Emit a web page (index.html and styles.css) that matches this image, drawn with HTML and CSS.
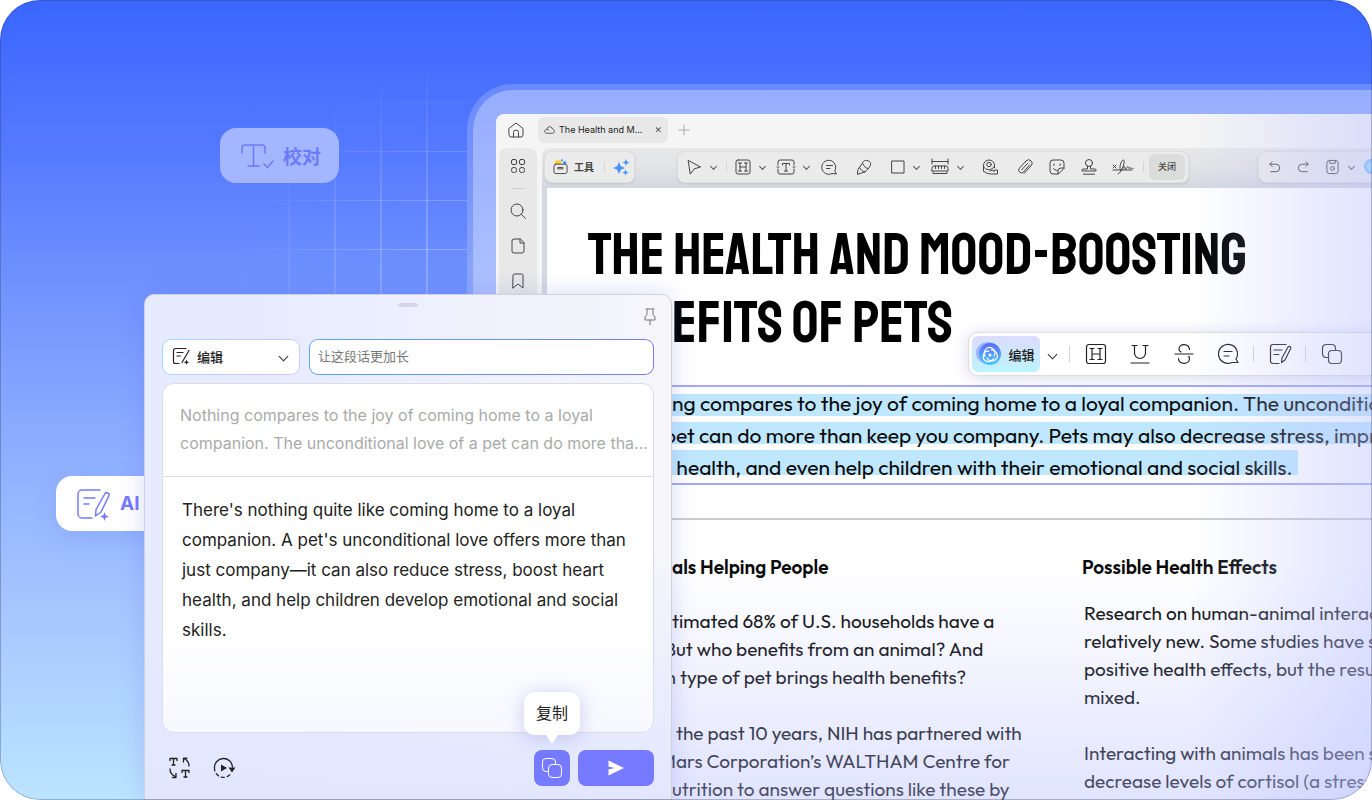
FILE: index.html
```html
<!DOCTYPE html>
<html lang="zh-CN">
  <head>
    <meta charset="UTF-8" />
    <meta name="viewport" content="width=device-width, initial-scale=1.0" />
    <title>AI 编辑</title>
    <link rel="stylesheet" href="styles.css">
  </head>
  <body>
    <div class="stage">
      <div class="grid-lines"></div>

      <div class="chip chip-proof">
        <svg class="chip-icon" viewBox="0 0 34 28">
          <path d="M2 11V6a3 3 0 0 1 3-3h17a3 3 0 0 1 3 3v5M13.500 3v21M8 24h11M24 22l3.500 3.500L33 19" />
        </svg>
        <span>校对</span>
      </div>

      <div class="chip chip-ai">
        <svg class="chip-icon" viewBox="0 0 34 32">
          <path d="M24 2H6a4 4 0 0 0-4 4v20a4 4 0 0 0 4 4h10M8 10h11M8 16h5M29 5.500c1.500-2 5 0 4 2.200L25 24l-5.500 4 .5-6.500z" />
          <path class="solid" d="M28.500 24l1.200 3.300 3.300 1.200-3.300 1.200-1.200 3.300-1.200-3.300-3.300-1.200 3.300-1.200z" />
        </svg>
        <span>AI</span>
      </div>

      <div class="frame">
        <div class="frame-inner">
          <div class="window">
            <div class="tabs">
              <button class="icon-btn home" aria-label="主页">
                <svg viewBox="0 0 16 16"><path d="M1 6.500L8 1l7 5.500V13a2 2 0 0 1-2 2H3a2 2 0 0 1-2-2zM5.500 15v-4.500a2.500 2.500 0 0 1 5 0V15" /></svg>
              </button>
              <div class="tab">
                <svg class="tab-icon" viewBox="0 0 16 16"><path d="M4.500 7a3.800 3.800 0 0 1 7.500 0c4 .5 4 6.500 0 6.500H4C0 13.500 0 8 4 8c2 0 3 1 3 1" /></svg>
                <span>The Health and M...</span>
                <button class="tab-close" aria-label="关闭标签">✕</button>
              </div>
              <button class="icon-btn add" aria-label="新建">
                <svg viewBox="0 0 16 16"><path d="M8 3v10M3 8h10" /></svg>
              </button>
            </div>

            <div class="body">
              <nav class="sidebar">
                <button class="icon-btn" aria-label="缩略图"><svg viewBox="0 0 16 16"><rect x="1.500" y="1.500" width="5" height="5" rx="1.500" /><rect x="9.500" y="1.500" width="5" height="5" rx="1.500" /><rect x="1.500" y="9.500" width="5" height="5" rx="2" /><rect x="9.500" y="9.500" width="5" height="5" rx="2" /></svg></button>
                <span class="side-line"></span>
                <button class="icon-btn" aria-label="搜索"><svg viewBox="0 0 16 16"><circle cx="7" cy="7" r="6" /><path d="M11.500 11.500L15.500 15.500" /></svg></button>
                <button class="icon-btn" aria-label="页面"><svg viewBox="0 0 16 16"><path d="M10 1H4a2 2 0 0 0-2 2v10a2 2 0 0 0 2 2h8a2 2 0 0 0 2-2V5zM10 1v4h4" /></svg></button>
                <button class="icon-btn" aria-label="书签"><svg viewBox="0 0 16 16"><path d="M3 2.500A1.500 1.500 0 0 1 4.500 1h7A1.500 1.500 0 0 1 13 2.500V15l-5-4-5 4z" /></svg></button>
              </nav>

              <main class="main">
                <div class="toolbar">
                  <div class="group group-tools">
                    <button class="tools-btn">
                      <svg viewBox="0 0 16 16">
                        <path class="yellow" d="M2 5V2.500L4 .500l1.500 1L7 .500l2 2V5z" />
                        <circle class="blue" cx="9.500" cy="0.800" r="1.200" />
                        <circle class="blue" cx="12.500" cy="3.500" r="1.800" />
                        <rect class="box" x="1" y="5" width="14" height="10" rx="2" /><path d="M5.500 8.500h5v1.500h-5z" />
                      </svg>
                      <span>工具</span>
                    </button>
                    <span class="sep"></span>
                    <button class="tool sparkle" aria-label="AI"><svg viewBox="0 0 16 16"><path d="M6 3l1.800 4.200L12 9l-4.200 1.800L6 15l-1.800-4.200L0 9l4.200-1.800zM13 0l1 2.500L16.500 3.500 14 4.500 13 7l-1-2.500-2.500-1 2.500-1zM12.500 10.500l.9 2.100 2.100.9-2.100.9-.9 2.100-.9-2.100-2.100-.9 2.100-.9z" /></svg></button>
                  </div>

                  <div class="group group-edit">
                    <button class="tool" aria-label="选择"><svg viewBox="0 0 16 16"><path d="M2.500 1.500l12 6.500-6.300 1.800-3.700 5z" /></svg></button>
                    <span class="chev"></span>
                    <span class="sep"></span>
                    <button class="tool" aria-label="高亮"><svg viewBox="0 0 16 16"><rect x="1" y="1" width="14" height="14" rx="2" /><path d="M5 4v8M11 4v8M5 8h6M3.500 4h3M9.500 4h3M3.500 12h3M9.500 12h3" /></svg></button>
                    <span class="chev"></span>
                    <button class="tool text-tool" aria-label="文本框"><svg viewBox="0 0 18 16"><path d="M1 6V3a2 2 0 0 1 2-2h12a2 2 0 0 1 2 2v3M17 10v3a2 2 0 0 1-2 2H3a2 2 0 0 1-2-2v-3M0 8h2M16 8h2M5.500 6V4.500h7V6M9 4.500V12M7.500 12h3" /></svg></button>
                    <span class="chev"></span>
                    <button class="tool" aria-label="批注"><svg viewBox="0 0 16 16"><path d="M14 11.500a7 7 0 1 0-3 3l4 .5zM5.500 6.500h6M5.500 9.500h3.500" /></svg></button>
                    <button class="tool wide" aria-label="荧光笔"><svg viewBox="0 0 16 16"><path d="M1.500 15L2 10.500 7.500 2.500c2-2.500 8-.5 7 3.500-1 3-4 5.500-5.500 6.800L5.500 14zM3.500 8.500c1.500 2.500 3 4 5.500 4.500M7 5c1 2.500 2.500 4 5 4.500" /></svg></button>
                    <button class="tool wide square" aria-label="形状"><svg viewBox="0 0 14 16"><rect x="1" y="2" width="12" height="12" /></svg></button>
                    <span class="chev"></span>
                    <button class="tool text-tool" aria-label="测量"><svg viewBox="0 0 18 16"><path d="M1 0v5M17 0v5M1 2.500h16M1 9a2 2 0 0 1 2-2h12a2 2 0 0 1 2 2v3H1zM2 13v1.500h14V13M4.500 7v2.500M7.500 7v2.500M10.500 7v2.500M13.500 7v2.500" /></svg></button>
                    <span class="chev"></span>
                    <button class="tool wide" aria-label="修正带"><svg viewBox="0 0 16 16"><circle cx="7" cy="5.500" r="2.200" /><path d="M1.500 12V6.500a5.500 5.500 0 0 1 11 0V9M1.500 7c1 5 9 5 11 0M1.500 12c2 2 5 3 8 3h6v-4h-2.500l-1 1.500-1-1.500-3 1" /></svg></button>
                    <button class="tool wide" aria-label="附件"><svg viewBox="0 0 16 16"><path d="M12.500 6L6.500 13a2.800 2.800 0 0 1-4.200-3.700L9 2a3.500 3.500 0 0 1 5.200 4.700L7 14.500M10.500 4.500L4.500 11" /></svg></button>
                    <button class="tool" aria-label="贴纸"><svg viewBox="0 0 16 16"><path d="M15 9V4a3 3 0 0 0-3-3H4a3 3 0 0 0-3 3v8a3 3 0 0 0 3 3h5zM15 9h-3a3 3 0 0 0-3 3v3M5 5v1.500M11 5v1.500M4.500 9.500A4 4 0 0 0 8 11.500" /></svg></button>
                    <button class="tool" aria-label="图章"><svg viewBox="0 0 16 16"><circle cx="8" cy="4" r="3.500" /><path d="M6.500 7v3H2a1 1 0 0 0-1 1v1h14v-1a1 1 0 0 0-1-1H9.500V7M2.500 15.200h11" /></svg></button>
                    <button class="tool sign" aria-label="签名"><svg viewBox="0 0 20 16"><path d="M0 6l3 3M3 6L0 9M0 11h19M5 15c3-1 7-10 6-13.500C10-.5 7.500 3 7 8c0 4 1.500 5 3 1 1-2 2-2 2 0s1 2 2-.5 2 .5 2 1 1-1 2-.5 1 .5 2 .5" /></svg></button>
                    <span class="sep"></span>
                    <button class="close-btn">关闭</button>
                  </div>

                  <div class="group group-history">
                    <button class="tool" aria-label="撤销"><svg viewBox="0 0 16 16"><path d="M5.500 2.500L3 5l2.500 2.500M3 5h6.500a4 4 0 0 1 0 8H4" /></svg></button>
                    <button class="tool" aria-label="重做"><svg viewBox="0 0 16 16"><path d="M10.500 2.500L13 5l-2.500 2.500M13 5H6.500a4 4 0 0 0 0 8H12" /></svg></button>
                    <button class="tool" aria-label="保存"><svg viewBox="0 0 16 16"><path d="M2 3.500A2.500 2.500 0 0 1 4.500 1h7A2.500 2.500 0 0 1 14 3.500v9a2.500 2.500 0 0 1-2.500 2.500h-7A2.500 2.500 0 0 1 2 12.500zM5 1v3h6V1" /><circle cx="8" cy="9.500" r="2" /></svg></button>
                    <span class="chev"></span>
                    <span class="orb"></span>
                  </div>
                </div>

                <article class="page">
                  <h1>THE HEALTH AND MOOD-BOOSTING<br><span class="lead">BEN</span>EFITS OF PETS</h1>
                  <p class="selected">
                    <span class="lead">Nothi</span>ng compares to the joy of coming home to a loyal companion. The unconditional love<br>
                    <span class="lead lead-wide">of a p</span>et can do more than keep you company. Pets may also decrease stress, improve<br>
                    <span class="lead">heart</span> health, and even help children with their emotional and social skills.
                  </p>
                  <hr>
                  <div class="columns">
                    <section class="col-left">
                      <h2><span class="lead">Anim</span>als Helping People</h2>
                      <p>
                        <span class="lead">An es</span>timated 68% of U.S. households have a<br>
                        <span class="lead lead-wide">pet. B</span>ut who benefits from an animal? And<br>
                        <span class="lead lead-wide">which</span> type of pet brings health benefits?
                      </p>
                      <p>
                        <span class="lead">Over</span> the past 10 years, NIH has partnered with<br>
                        <span class="lead lead-wide">the M</span>ars Corporation’s WALTHAM Centre for<br>
                        <span class="lead">Pet N</span>utrition to answer questions like these by
                      </p>
                    </section>
                    <section class="col-right">
                      <h2>Possible Health Effects</h2>
                      <p>
                        Research on human-animal interactions is<br>
                        relatively new. Some studies have shown<br>
                        positive health effects, but the results are<br>
                        mixed.
                      </p>
                      <p>
                        Interacting with animals has been shown to<br>
                        decrease levels of cortisol (a stress-related
                      </p>
                    </section>
                  </div>
                </article>
              </main>
            </div>

            <div class="float-bar">
              <button class="ai-btn">
                <svg viewBox="0 0 26 26">
                  <defs>
                    <linearGradient id="orbFill" x1="0" y1="0" x2="0" y2="1"><stop offset="0" stop-color="#5c6bff" /><stop offset="1" stop-color="#48c9ff" /></linearGradient>
                  </defs>
                  <ellipse class="halo" cx="11" cy="12" rx="12" ry="11" />
                  <circle class="disc" cx="13" cy="13" r="11" />
                  <g class="orbit">
                    <path id="petal" d="M8 15.500C5.500 9 11 4.500 15.500 7.500c3 2 3 5 1.500 7.500" />
                    <use href="#petal" transform="rotate(120 13 14)" />
                    <use href="#petal" transform="rotate(240 13 14)" />
                  </g>
                  <circle class="dot" cx="13" cy="14" r="1.500" />
                </svg>
                <span>编辑</span>
              </button>
              <span class="chev"></span>
              <span class="sep"></span>
              <button class="big" aria-label="高亮"><svg viewBox="0 0 22 22"><rect x="1.500" y="1.500" width="19" height="19" rx="2.500" /><path d="M7 5.500v11M15 5.500v11M7 11h8M5 5.500h4M13 5.500h4M5 16.500h4M13 16.500h4" /></svg></button>
              <button class="big" aria-label="下划线"><svg viewBox="0 0 22 22"><path d="M3 2.500h5M14 2.500h5M5.500 2.500V10a5.500 5.500 0 0 0 11 0V2.500M2 20h18" /></svg></button>
              <button class="big" aria-label="删除线"><svg viewBox="0 0 22 22"><path d="M2 11h18M16.500 6.500C16 0 6 0 6 6c0 1.500 1 2.500 2 3M5.500 15.500C6 22 16.500 22 16.500 15.500c0-1-.3-1.500-.8-2" /></svg></button>
              <button class="big" aria-label="批注"><svg viewBox="0 0 22 22"><path d="M19 16a9.500 9.500 0 1 0-4 3.500h6zM7 8.500h8M7 13h5" /></svg></button>
              <span class="sep"></span>
              <button class="big" aria-label="改写"><svg viewBox="0 0 22 22"><path d="M17 1.500H4A2.500 2.500 0 0 0 1.500 4v14A2.500 2.500 0 0 0 4 20.500h6M5 7h8M5 11.500h5M19 4c1.500-1.500 3.500 0 2.500 1.800L16 17l-3.500 2.500.5-4.500z" /></svg></button>
              <span class="sep"></span>
              <button class="big" aria-label="复制"><svg viewBox="0 0 22 22"><path d="M7 14.500H5A3.500 3.500 0 0 1 1.500 11V5A3.500 3.500 0 0 1 5 1.500h6A3.500 3.500 0 0 1 14.500 5v2" /><rect x="7.500" y="7.500" width="13" height="13" rx="3.500" /></svg></button>
            </div>

            <div class="fade"></div>
          </div>
        </div>
      </div>

      <div class="panel">
        <div class="panel-top">
          <span class="handle"></span>
          <button class="pin" aria-label="固定"><svg viewBox="0 0 16 18"><path d="M4 1h8M5 1.500v5L3 9v3h10V9l-2-2.500v-5M8 12v5" /></svg></button>
        </div>

        <div class="panel-row">
          <div class="mode">
            <svg class="mode-icon" viewBox="0 0 18 18"><path d="M14 1.500H3.500a2 2 0 0 0-2 2v11a2 2 0 0 0 2 2H7M5 5.500h6M5 9h3.500M17 3.500L10 15.500" /><path class="solid" d="M14.500 12.500l.8 2 2 .8-2 .8-.8 1.900-.8-1.900-2-.8 2-.8z" /></svg>
            <select id="mode" aria-label="模式">
              <option>编辑</option>
            </select>
            <span class="chev"></span>
          </div>
          <input class="prompt" type="text" aria-label="指令" placeholder="让这段话更加长" />
        </div>

        <div class="card">
          <p class="source">Nothing compares to the joy of coming home to a loyal<br>companion. The unconditional love of a pet can do more tha...</p>
          <p class="answer">There's nothing quite like coming home to a loyal<br>companion. A pet's unconditional love offers more than<br>just company—it can also reduce stress, boost heart<br>health, and help children develop emotional and social<br>skills.</p>
        </div>

        <div class="panel-foot">
          <button class="foot-icon" aria-label="替换"><svg viewBox="0 0 24 24"><path d="M2 4.500V2.500h7v2M5.500 2.500V9M4 9h3M14 16.500v-2h7v2M17.500 14.500V21M16 21h3M21 10c0-3-1.500-6-5-7.500M15.500 6V2.200h3.500M2 13c0 3.500 1.500 6 5.500 7.500M4.500 21.500h3.500V17.500" /></svg></button>
          <button class="foot-icon" aria-label="继续"><svg viewBox="0 0 24 24"><path d="M2.500 12a9 9 0 0 1 18-1" /><path class="dash" d="M2.500 12a9 9 0 0 0 16 6" /><path class="solid" d="M9 8.500v7l6-3.500zM16.500 11.500h7L20 16.500z" /></svg></button>
          <div class="copy-wrap">
            <div class="tooltip">复制</div>
            <button class="copy" aria-label="复制"><svg viewBox="0 0 22 22"><path d="M7 14.500H5A3.500 3.500 0 0 1 1.500 11V5A3.500 3.500 0 0 1 5 1.500h6A3.500 3.500 0 0 1 14.500 5v2" /><rect x="7.500" y="7.500" width="13" height="13" rx="3.500" /></svg></button>
          </div>
          <button class="send" aria-label="发送"><svg viewBox="0 0 16 16"><path d="M.500.500L16 8 .500 15.500V9.500L6.500 8 .500 6.500z" /></svg></button>
        </div>
      </div>
    </div>
  </body>
</html>
```
FILE: styles.css
```css
* {
  box-sizing: border-box;
}
body {
  margin: 0;
  background: #fff;
  font-family: Inter, "Noto Sans CJK SC", sans-serif;
  color: #222;
}
button {
  border: 0;
  padding: 0;
  background: none;
  color: inherit;
  font: inherit;
  display: flex;
  align-items: center;
  justify-content: center;
}
svg {
  fill: none;
  stroke: currentColor;
  stroke-linecap: round;
  stroke-linejoin: round;
  display: block;
  overflow: visible;
}
svg .solid {
  fill: currentColor;
  stroke: none;
}
.stage {
  position: relative;
  height: 100vh;
  border-radius: 40px;
  overflow: hidden;
  background: linear-gradient(#3a66ff, #577bff 20%, #7396ff 38%, #8daeff 56%, #a3c3ff 74%, #bce4ff);
}
.stage::after {
  content: "";
  position: absolute;
  inset: 0;
  border: 1px solid rgba(40, 50, 90, 0.3);
  border-radius: 40px;
  pointer-events: none;
}
.grid-lines {
  position: absolute;
  left: 240px;
  top: 53px;
  width: 227px;
  height: 260px;
  background:
    linear-gradient(to right, rgba(255, 255, 255, 0.22) 2px, transparent 2px) 2px 0 / 46px 100%,
    linear-gradient(rgba(255, 255, 255, 0.25) 1px, transparent 1px) 0 0 / 100% 49px;
  mask-image: radial-gradient(circle at 100% 90%, #000 20%, transparent 72%);
}

/* chips */
.chip {
  position: absolute;
  height: 55px;
  display: flex;
  align-items: center;
  border-radius: 16px;
  padding-left: 20px;
  font-size: 19px;
  font-weight: 700;
  color: #767aff;
}
.chip-icon {
  width: 34px;
  stroke-width: 1.5;
}
.chip-proof {
  left: 220px;
  top: 128px;
  width: 119px;
  gap: 9px;
  background: #a3b6ff;
  color: #6b7bf8;
}
.chip-ai {
  left: 56px;
  top: 476px;
  width: 140px;
  gap: 10px;
  background: #fff;
  box-shadow: 0 8px 24px rgba(90, 110, 240, 0.2);
}

/* app window */
.frame {
  position: absolute;
  left: 467px;
  top: 84px;
  right: 0;
  bottom: 0;
  padding: 6px 0 0 6px;
  border-radius: 46px 0 0 0;
  background: rgba(255, 255, 255, 0.18);
}
.frame-inner {
  height: 100%;
  padding: 24px 0 0 23px;
  border-radius: 40px 0 0 0;
  background: rgba(255, 255, 255, 0.3);
}
.window {
  position: relative;
  height: 100%;
  display: flex;
  flex-direction: column;
  overflow: hidden;
  border-radius: 8px 0 0 0;
  background: #f5f5f5;
}
.tabs {
  height: 34px;
  flex: none;
  display: flex;
  align-items: center;
  padding: 0 12px 3px;
}
.icon-btn svg {
  width: 16px;
  height: 16px;
}
.icon-btn {
  color: #444;
}
.tab {
  width: 130px;
  height: 26px;
  margin: 0 8px 0 14px;
  padding: 0 6px;
  display: flex;
  align-items: center;
  gap: 4px;
  white-space: nowrap;
  border-radius: 6px;
  background: #e8e8e8;
  font-size: 9px;
}
.tab-icon {
  width: 11px;
  flex: none;
}
.tab-close {
  margin-left: auto;
  font-family: "DejaVu Sans", sans-serif;
  font-size: 9px;
  color: #555;
}
.add {
  color: #aaa;
}
.body {
  flex: 1;
  min-height: 0;
  display: flex;
  gap: 5px;
  padding-left: 3px;
}
.sidebar {
  width: 38px;
  flex: none;
  display: flex;
  flex-direction: column;
  align-items: center;
  gap: 19px;
  padding-top: 10px;
  border-radius: 8px 8px 0 0;
  background: #e8e8e8;
}
.side-line {
  width: 13px;
  height: 1px;
  margin: -5px 0;
  background: #ccc;
}
.main {
  flex: 1;
  min-width: 0;
  display: flex;
  flex-direction: column;
  border-radius: 8px 0 0 0;
  background: linear-gradient(#e8e8e8, #e2e3e6 20px, #d6d8e1 40px);
  overflow: hidden;
}
.toolbar {
  height: 40px;
  flex: none;
  display: flex;
  align-items: center;
  padding: 0 0 3px 2px;
}
.group {
  height: 32px;
  flex: none;
  display: flex;
  align-items: center;
  padding: 0 3px 0 8px;
  border: 1px solid #dedee0;
  border-radius: 8px;
  background: #ebebeb;
  box-shadow: 0 1px 3px rgba(0, 0, 0, 0.1);
  color: #444;
}
.group-edit {
  margin-left: 42px;
}
.group-history {
  width: 140px;
  margin-left: 69px;
}
.tool {
  margin-left: 16px;
}
.tool svg {
  width: 16px;
  height: 16px;
}
.group-history .tool {
  margin-left: 14px;
}
.group-edit .tool:first-child,
.group-history .tool:first-child {
  margin-left: 0;
}
.group-history .tool svg {
  width: 15px;
}
.text-tool svg {
  width: 18px;
}
.square svg {
  width: 14px;
}
.sign svg {
  width: 20px;
}
.chev {
  width: 6px;
  height: 6px;
  flex: none;
  margin-left: 8px;
  display: flex;
  align-items: center;
  justify-content: center;
}
.chev::before {
  content: "";
  width: 4px;
  height: 4px;
  flex: none;
  border: solid #555;
  border-width: 0 1px 1px 0;
  transform: rotate(45deg);
}
.chev + .tool {
  margin-left: 12px;
}
.sep {
  width: 1px;
  height: 10px;
  flex: none;
  margin-left: 10px;
  background: #d4d4d8;
}
.sep + .tool {
  margin-left: 8px;
}
.tool.wide {
  margin-left: 19px;
}
.group-tools {
  width: 91px;
}
.tools-btn {
  gap: 6px;
  font-size: 10px;
  font-weight: 700;
}
.tools-btn svg {
  width: 15px;
  height: 16px;
}
.tools-btn .box {
  fill: #ebebeb;
}
.tools-btn .yellow {
  fill: #ffcc2e;
  stroke: none;
}
.tools-btn .blue {
  fill: #3f9bff;
  stroke: none;
}
.sparkle svg {
  fill: #4593ff;
  stroke: none;
}
.close-btn {
  width: 36px;
  height: 26px;
  margin-left: 5px;
  border-radius: 6px;
  background: #dcdcdc;
  font-size: 9px;
  font-weight: 500;
}
.orb {
  width: 15px;
  height: 15px;
  flex: none;
  margin-left: 10px;
  border-radius: 50%;
  background: radial-gradient(circle, #9fdcff 30%, #4f8fff);
}

/* document */
.page {
  flex: 1;
  min-height: 0;
  margin-left: 5px;
  padding-top: 33px;
  overflow: hidden;
  white-space: nowrap;
  background: #fff;
  font-family: Outfit, Lato, sans-serif;
  color: #0a0a0a;
}
.page h1 {
  margin: 0 0 28px;
  padding-left: 41px;
  font-family: Staatliches, "Bebas Neue", "Roboto Condensed", sans-serif;
  font-size: 59px;
  line-height: 68px;
  font-weight: 400;
  color: #000;
}
.lead {
  display: inline-block;
  width: 84px;
  text-align: right;
}
.lead-wide {
  width: 88px;
}
.selected {
  margin: 0;
  padding-left: 41px;
  border: solid #a5a8ff;
  border-width: 2px 0;
  font-size: 21px;
  line-height: 32px;
  background:
    linear-gradient(#bfe7ff, #bfe7ff) 0 7px / 100% 22px no-repeat,
    linear-gradient(#bfe7ff, #bfe7ff) 0 35px / 100% 22px no-repeat,
    linear-gradient(#bfe7ff, #bfe7ff) 0 63px / 751px 25px no-repeat;
}
.page hr {
  height: 2px;
  margin: 33px 0;
  border: 0;
  background: #ccc;
}
.columns {
  display: flex;
  padding-left: 41px;
}
.col-left {
  width: 494px;
  flex: none;
}
.columns h2 {
  margin: 0;
  font-size: 19px;
  line-height: 28px;
  font-weight: 600;
}
.columns p {
  margin: 0 0 28px;
  font-size: 19px;
  line-height: 28px;
}
.col-left h2 {
  margin-bottom: 26px;
}
.col-right h2 {
  margin-bottom: 18px;
}
.col-right p {
  padding-left: 2px;
}
.fade {
  position: absolute;
  inset: 0;
  pointer-events: none;
  background:
    linear-gradient(to right, transparent 79%, rgba(185, 194, 255, 0.44)),
    linear-gradient(transparent 66%, rgba(180, 188, 255, 0.4));
}

/* floating selection bar */
.float-bar {
  position: absolute;
  left: 472px;
  top: 218px;
  right: -12px;
  height: 44px;
  display: flex;
  align-items: center;
  padding-left: 3px;
  border: 1px solid #ddd;
  border-radius: 10px;
  background: #fff;
  box-shadow: 0 2px 16px rgba(60, 60, 160, 0.2);
}
.ai-btn {
  width: 68px;
  height: 36px;
  flex: none;
  gap: 5px;
  border-radius: 6px;
  background: linear-gradient(#dcdcff, #bdf3ff);
  font-size: 13px;
  font-weight: 500;
}
.ai-btn svg {
  width: 26px;
  height: 26px;
}
.ai-btn .halo {
  fill: #9db4ff;
  stroke: none;
}
.ai-btn .disc {
  fill: url(#orbFill);
  stroke: none;
}
.ai-btn .dot {
  fill: #fff;
  stroke: none;
}
.orbit {
  stroke: #fff;
  stroke-width: 1.2;
}
.float-bar .chev {
  margin-left: 9px;
}
.float-bar .chev::before,
.mode .chev::before {
  width: 6px;
  height: 6px;
  border-color: #333;
}
.float-bar .sep {
  height: 16px;
  margin: 0 2px 0 14px;
}
.big {
  margin-left: 13px;
}
.big svg {
  width: 22px;
  height: 22px;
  stroke-width: 1.2;
}
.big + .big {
  margin-left: 22px;
}

/* AI panel */
.panel {
  position: absolute;
  left: 144px;
  top: 294px;
  bottom: 0;
  width: 528px;
  display: flex;
  flex-direction: column;
  padding: 0 17px 13px;
  border: 1px solid #cfd0d8;
  border-radius: 10px 10px 0 0;
  background:
    linear-gradient(transparent 50%, #e2e7ff),
    linear-gradient(to right, #e7ebff 20%, #f6f6fa);
  box-shadow: 0 0 24px rgba(80, 90, 220, 0.22);
}
.panel-top {
  height: 44px;
  flex: none;
  display: flex;
  justify-content: flex-end;
}
.handle {
  width: 20px;
  height: 4px;
  margin: 8px auto 0 236px;
  border-radius: 2px;
  background: #d3d6e4;
}
.pin {
  width: 8px;
  color: #777;
}
.pin svg {
  width: 16px;
  height: 18px;
  flex: none;
}
.panel-row {
  display: flex;
  gap: 9px;
}
.mode {
  width: 138px;
  height: 36px;
  display: flex;
  align-items: center;
  padding: 0 13px 2px 9px;
  border: 1px solid transparent;
  border-radius: 9px;
  background:
    linear-gradient(#fff, #fff) padding-box,
    linear-gradient(to right, #a9d4ff, #cfc8ff) border-box;
}
.mode-icon {
  width: 18px;
  flex: none;
  stroke-width: 1.2;
}
.mode select {
  flex: 1;
  min-width: 0;
  margin-left: 7px;
  padding: 0;
  border: 0;
  appearance: none;
  background: none;
  font: 500 13px "Noto Sans CJK SC", sans-serif;
  color: #222;
}
.prompt {
  flex: 1;
  min-width: 0;
  height: 36px;
  padding: 0 8px 3px;
  border: 1px solid transparent;
  border-radius: 9px;
  background:
    linear-gradient(#fff, #fff) padding-box,
    linear-gradient(to right, #5aa5ff, #767aff) border-box;
  font: 13px "Noto Sans CJK SC", sans-serif;
}
.prompt::placeholder {
  color: #777;
}
.card {
  flex: 1;
  margin: 8px 0 17px;
  border: 1px solid #dcdde4;
  border-radius: 12px;
  background: linear-gradient(#fff 70%, #f7f8ff);
  white-space: nowrap;
}
.source {
  margin: 0;
  padding: 17px 17px 19px;
  border-bottom: 1px solid #ddd;
  font-size: 16px;
  line-height: 28px;
  color: #aaa;
}
.answer {
  margin: 0;
  padding: 18px 19px;
  font-size: 17px;
  line-height: 30px;
}
.panel-foot {
  flex: none;
  display: flex;
  align-items: center;
  padding-left: 6px;
}
.foot-icon {
  margin-right: 20px;
}
.foot-icon svg {
  width: 24px;
  height: 24px;
  stroke-width: 1.3;
}
.dash {
  stroke-dasharray: 3 3;
}
.copy-wrap {
  position: relative;
  margin-left: auto;
}
.copy,
.send {
  height: 36px;
  border-radius: 8px;
  background: #767aff;
  color: #fff;
}
.copy {
  width: 36px;
}
.copy svg {
  width: 22px;
}
.send {
  width: 76px;
  margin-left: 8px;
}
.send svg {
  width: 16px;
  fill: #fff;
  stroke: none;
}
.tooltip {
  position: absolute;
  left: 50%;
  bottom: 51px;
  width: 56px;
  margin-left: -28px;
  border-radius: 10px;
  background: #fff;
  box-shadow: 0 2px 20px rgba(80, 90, 200, 0.28);
  font-size: 16px;
  line-height: 43px;
  text-align: center;
}
.tooltip::after {
  content: "";
  position: absolute;
  left: 22px;
  top: 100%;
  border: 6px solid transparent;
  border-top: 9px solid #fff;
  border-bottom: 0;
}
```
